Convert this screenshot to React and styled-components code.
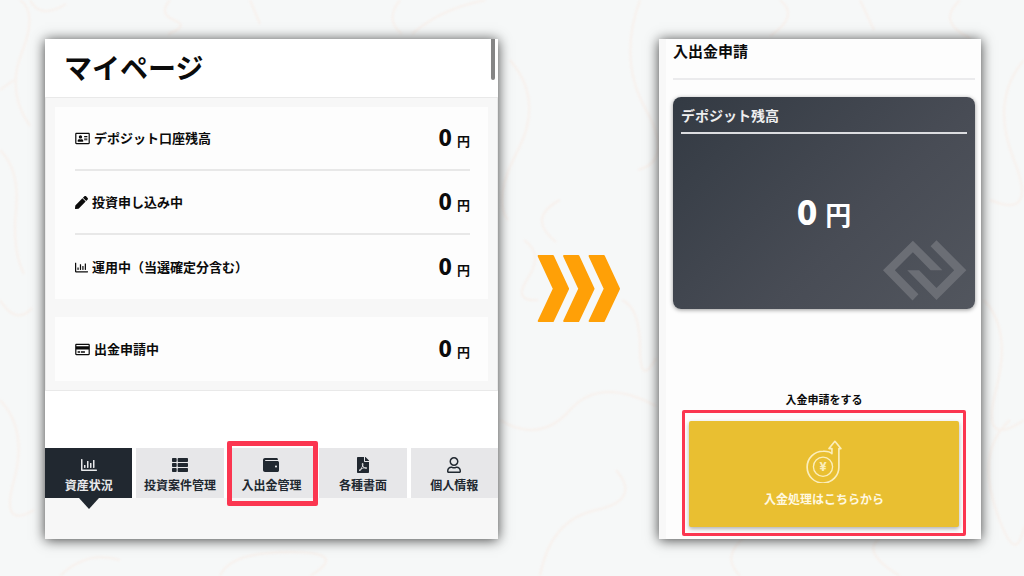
import React from 'react'
import styled, { createGlobalStyle, css } from 'styled-components'
import {
  FaRegAddressCard,
  FaPen,
  FaRegChartBar,
  FaRegCreditCard,
  FaThList,
  FaWallet,
  FaFilePdf,
  FaRegUser
} from 'react-icons/fa'

const GlobalStyle = createGlobalStyle`
  * {
    box-sizing: border-box;
  }
  body {
    margin: 0;
    background-color: #f6f8f8;
    color: #0b0b0b;
    font-family: 'Noto Sans CJK JP', sans-serif;
  }
  h1, h2, h3, p, dl, dt, dd {
    margin: 0;
  }
  button {
    font-family: inherit;
    border: 0;
    cursor: pointer;
  }
`

const Stage = styled.main`
  position: relative;
  display: grid;
  grid-template-columns: 453fr 161fr 322fr;
  min-height: 100vh;
  padding: 39px 43px 37px 45px;
  overflow: hidden;
`

const Marble = styled.svg`
  position: absolute;
  inset: 0;
  width: 100%;
  height: 100%;
  fill: none;
  stroke: #fae5da;
  stroke-width: 2;
  stroke-linejoin: round;
  opacity: 0.4;
  filter: blur(1px);
`

const Panel = styled.section`
  position: relative;
  display: flex;
  flex-direction: column;
  background-color: ${props => props.$bg || '#fff'};
  box-shadow: 0 1px 12px rgba(0, 0, 0, 0.75);
`

const PageHead = styled.header`
  padding: 8px 19px 10px;
  h1 {
    font-size: 28px;
    line-height: 40px;
    font-weight: 700;
  }
`

const ScrollThumb = styled.span`
  position: absolute;
  top: 0;
  right: 3px;
  width: 4px;
  height: 41px;
  border-radius: 0 0 2px 2px;
  background-color: #858585;
`

const Summary = styled.div`
  display: flex;
  flex-direction: column;
  gap: 18px;
  padding: 9px;
  border: 1px solid #e9e9e9;
  background-color: #f7f7f7;
`

const Card = styled.dl`
  padding: 0 18px 0 20px;
  background-color: #fdfdfd;
`

const Row = styled.div`
  display: flex;
  align-items: center;
  justify-content: space-between;
  height: 64px;
  border-bottom: 2px solid #e8e8e8;
  &:last-child {
    border-bottom: 0;
  }
`

const RowLabel = styled.dt`
  display: flex;
  align-items: center;
  gap: 4px;
  font-size: 13px;
  line-height: 20px;
  font-weight: 700;
  svg {
    width: ${props => (props.$wide ? '15px' : '13px')};
    height: 13px;
  }
`

const Amount = styled.dd`
  font-size: 13px;
  line-height: 24px;
  font-weight: 700;
  b {
    margin-right: 5px;
    font-size: 22px;
  }
`

const TabBar = styled.nav`
  display: grid;
  grid-template-columns: repeat(5, 1fr);
  gap: 4px;
  margin-top: auto;
`

const Tab = styled.button`
  position: relative;
  display: flex;
  flex-direction: column;
  align-items: center;
  gap: 4px;
  padding: 9px 0 5px;
  background-color: #e7e7e9;
  color: #212830;
  font-size: 12px;
  line-height: 16px;
  font-weight: 700;
  white-space: nowrap;
  svg {
    width: 16px;
    height: 16px;
  }
  ${props =>
    props.$active &&
    css`
      background-color: #212830;
      color: #e9e9eb;
      &::after {
        content: '';
        position: absolute;
        top: 100%;
        border: 10px solid transparent;
        border-top: 11px solid #212830;
        border-bottom: 0;
      }
    `}
`

const Marker = styled.span`
  position: absolute;
  inset: ${props => props.$inset};
  border: ${props => props.$width} solid #fb3650;
  border-radius: 2px;
  pointer-events: none;
`

const PanelFoot = styled.footer`
  height: 41px;
  background-color: #f7f7f7;
`

const Arrows = styled.svg`
  position: relative;
  place-self: center;
  width: 84px;
  fill: #ffa007;
  stroke: #ffa007;
  stroke-width: 6;
  stroke-linejoin: round;
`

const RequestBody = styled.div`
  padding: 0 6px 12px 7px;
  border-left: 7px solid #f8f8f8;
`

const RequestTitle = styled.h2`
  padding-bottom: 15px;
  border-bottom: 2px solid #ebebed;
  font-size: 15px;
  line-height: 24px;
  font-weight: 700;
`

const Deposit = styled.div`
  position: relative;
  margin-top: 17px;
  padding: 8px;
  border-radius: 8px;
  background: linear-gradient(135deg, #333a43 0%, #484c55 60%, #52565e 100%);
  box-shadow: 0 1px 4px rgba(0, 0, 0, 0.4);
  color: #fff;
  h3 {
    padding-bottom: 7px;
    border-bottom: 2px solid #dcdde0;
    color: #eeeeef;
    font-size: 14px;
    line-height: 20px;
    font-weight: 700;
  }
`

const DepositAmount = styled.p`
  padding: 53px 0 63px;
  text-align: center;
  font-size: 26px;
  line-height: 48px;
  font-weight: 700;
  b {
    margin-right: 8px;
    font-size: 34px;
  }
`

const Emblem = styled.svg`
  position: absolute;
  right: 8px;
  bottom: 8px;
  width: 84px;
  fill: #6b6e75;
`

const RequestLabel = styled.p`
  margin-top: 80px;
  text-align: center;
  font-size: 11px;
  line-height: 20px;
  font-weight: 700;
`

const DepositButton = styled.button`
  position: relative;
  display: flex;
  flex-direction: column;
  align-items: center;
  gap: 6px;
  width: calc(100% - 32px);
  margin: 12px 16px 0;
  padding: 19px 0 18px;
  border-radius: 2px;
  background-color: #e9bf31;
  box-shadow: 0 2px 4px rgba(0, 0, 0, 0.3);
  color: #fff8e0;
  font-size: 12px;
  line-height: 20px;
  font-weight: 700;
`

const CoinSvg = styled.svg`
  width: 36px;
  height: 43px;
  fill: none;
  stroke: #fbeebc;
  stroke-width: 5;
  stroke-linejoin: round;
  text {
    fill: #fbeebc;
    stroke: none;
    font: 700 40px Roboto, sans-serif;
    text-anchor: middle;
  }
`

const balances = [
  { icon: FaRegAddressCard, label: 'デポジット口座残高', value: 0, wide: true },
  { icon: FaPen, label: '投資申し込み中', value: 0 },
  { icon: FaRegChartBar, label: '運用中（当選確定分含む）', value: 0 }
]

const withdrawals = [
  { icon: FaRegCreditCard, label: '出金申請中', value: 0, wide: true }
]

const tabs = [
  { icon: FaRegChartBar, label: '資産状況', active: true },
  { icon: FaThList, label: '投資案件管理' },
  { icon: FaWallet, label: '入出金管理', marked: true },
  { icon: FaFilePdf, label: '各種書面' },
  { icon: FaRegUser, label: '個人情報' }
]

const BalanceCard = ({ items }) => (
  <Card>
    {items.map(({ icon: Icon, label, value, wide }) => (
      <Row key={label}>
        <RowLabel $wide={wide}>
          <Icon />
          {label}
        </RowLabel>
        <Amount>
          <b>{value}</b>円
        </Amount>
      </Row>
    ))}
  </Card>
)

const MarbleVeins = () => (
  <Marble viewBox="0 0 1024 576" preserveAspectRatio="none" aria-hidden="true">
    <path d="M20 0q18 12 2 52t8 74M0 150q20 20 16 60t8 64M0 300q16 26 32 8M30 0q10 20 36 4" />
    <path d="M170 0q-12 14 4 20t-6 14M400 0q-16 20 2 34M412 34q30-26 74-34M250 0l10 24" />
    <path d="M510 60q34 40 8 90t-10 70M640 0q-22 60 6 110t-8 60M524 240q20 14 4 38t10 22M560 200q-34 18-4 42" />
    <path d="M622 300q18 8 18 48t16 10M500 420q40 24 70-10t86-4M540 576q10-56 56-66t20-40" />
    <path d="M780 0q20 16-10 36M860 0l14 30M960 0q-24 22 10 38M1024 60q-34 40-10 100t-24 40" />
    <path d="M984 300q28 30 12 90t28 30M1010 420q-34 30-14 90t28 16M900 576q-40-24-20-38M740 576q-20-20 6-40" />
    <path d="M0 400q28 30 14 80t20 30M60 576q26-26 60-16M220 576q10-24 70-24t20 24M0 90l14-10" />
  </Marble>
)

const CoinIcon = () => (
  <CoinSvg viewBox="408 181 108 130" aria-hidden="true">
    <path d="M507 207V262A48 48 0 1 1 459 215Q478 214 486 222V207H477L495 185L513 207Z" />
    <circle cx="459" cy="262" r="29" strokeWidth="4" />
    <text x="459" y="276">¥</text>
  </CoinSvg>
)

const App = () => {
  return (
    <>
      <GlobalStyle />
      <Stage>
        <MarbleVeins />
        <Panel>
          <PageHead>
            <h1>マイページ</h1>
          </PageHead>
          <ScrollThumb />
          <Summary>
            <BalanceCard items={balances} />
            <BalanceCard items={withdrawals} />
          </Summary>
          <TabBar>
            {tabs.map(({ icon: Icon, label, active, marked }) => (
              <Tab key={label} type="button" $active={active}>
                <Icon />
                {label}
                {marked && <Marker $inset="-7px -3px -8px -1px" $width="5px" />}
              </Tab>
            ))}
          </TabBar>
          <PanelFoot />
        </Panel>
        <Arrows viewBox="48 42 254 210" aria-hidden="true">
          <path d="M53 48H96L142 147L96 245H53L99 147Z" />
          <path d="M130 48H173L219 147L173 245H130L176 147Z" />
          <path d="M207 48H250L296 147L250 245H207L253 147Z" />
        </Arrows>
        <Panel $bg="#fdfdfd">
          <RequestBody>
            <RequestTitle>入出金申請</RequestTitle>
            <Deposit>
              <h3>デポジット残高</h3>
              <DepositAmount>
                <b>0</b>円
              </DepositAmount>
              <Emblem viewBox="306 180 256 186" aria-hidden="true">
                <path d="M397 182L487 272H451L397 217L342 272L414 345L396 364L306 272Z" />
                <path d="M451 199L469 181L560 272L469 363L380 272H416L469 326L523 272Z" />
              </Emblem>
            </Deposit>
            <RequestLabel>入金申請をする</RequestLabel>
            <DepositButton type="button">
              <CoinIcon />
              入金処理はこちらから
              <Marker $inset="-11px -7px -9px" $width="3px" />
            </DepositButton>
          </RequestBody>
        </Panel>
      </Stage>
    </>
  )
}

export default App
